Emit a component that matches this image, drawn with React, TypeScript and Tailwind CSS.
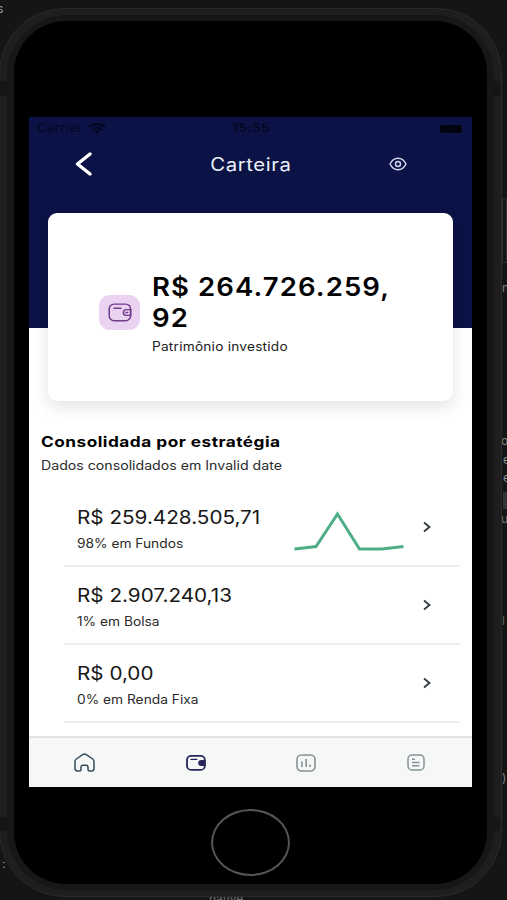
import { JSX } from "react";

interface Estrategia {
  valor: string;
  descricao: string;
  grafico: boolean;
}

const estrategias: Estrategia[] = [
  { valor: "R$ 259.428.505,71", descricao: "98% em Fundos", grafico: true },
  { valor: "R$ 2.907.240,13", descricao: "1% em Bolsa", grafico: false },
  { valor: "R$ 0,00", descricao: "0% em Renda Fixa", grafico: false },
];

// Pieces of the editor window that show around the simulator
const fragmentos: { texto: string; className: string }[] = [
  { texto: "s", className: "left-[-3px] top-[2px] text-[#a0a0a0]" },
  { texto: ":", className: "left-[2px] top-[857px] text-[#909090]" },
  { texto: "native", className: "left-[209px] top-[892px] text-[#707070]" },
  { texto: "n", className: "left-[502px] top-[281px] text-[#808080]" },
  { texto: "o", className: "left-[501px] top-[434px] text-[#808080]" },
  { texto: "e", className: "left-[503px] top-[453px] text-[#909090]" },
  { texto: "e", className: "left-[503px] top-[471px] text-[#909090]" },
  { texto: "u", className: "left-[501px] top-[512px] text-[#707070]" },
  { texto: "l", className: "left-[502px] top-[614px] text-[#606060]" },
  { texto: ")", className: "left-[502px] top-[771px] text-[#808080]" },
];

function WalletIcon({ ativo, className }: { ativo: boolean; className: string }): JSX.Element {
  return (
    <svg viewBox="0 0 24 20" preserveAspectRatio="none" fill="none" stroke="currentColor" className={className}>
      <rect x="1.2" y="1.2" width="21.4" height="17.4" rx="5" strokeWidth={ativo ? 2.2 : 1.5} />
      <path d="M6 5.6h7" strokeWidth="1.6" strokeLinecap="round" />
      <path
        d="M22.6 7h-4.2a3 3 0 0 0 0 6h4.2z"
        fill={ativo ? "currentColor" : "none"}
        strokeWidth="1.5"
      />
      <path d="M18 10h1.6" strokeWidth="1.4" strokeLinecap="round" />
    </svg>
  );
}

function StatusBar(): JSX.Element {
  return (
    <div className="flex h-[22px] items-center pl-[8px] pr-[10px] pt-[1px] text-[11.5px] text-[#050720]">
      <div className="flex flex-1 items-center">
        <span className="w-[51px]">
          <span className="block origin-left scale-x-[1.17] tracking-[0.2px]">Carrier</span>
        </span>
        <svg viewBox="0 0 18 11" className="h-[11px] w-[18px]" fill="none" stroke="currentColor" strokeWidth="2.3">
          <path d="M1 4.2C5.5.2 12.5.2 17 4.2" />
          <path d="M4 7C7 4.4 11 4.4 14 7" />
          <path d="M6.6 8.4C8 7.3 10 7.3 11.4 8.4L9 10.8z" fill="currentColor" stroke="none" />
        </svg>
      </div>
      <span className="ml-[4px] scale-x-[1.17] font-semibold tracking-[0.4px]">15:55</span>
      <div className="flex flex-1 justify-end">
        <div className="h-[8px] w-[22px] rounded-[2px] bg-[#020412]" />
      </div>
    </div>
  );
}

function Header(): JSX.Element {
  return (
    <div className="flex h-[50px] items-center pl-[46px] pr-[65px]">
      <svg viewBox="0 0 18 26" className="h-[26px] w-[18px]" fill="none" stroke="white" strokeWidth="3.5">
        <path d="M15 3L2.5 13L15 23" strokeLinecap="round" strokeLinejoin="round" />
      </svg>
      <div className="flex flex-1 justify-center pl-[19px]">
        <span className="scale-x-[1.13] text-[18px] tracking-[0.5px] text-[#eceef8]">Carteira</span>
      </div>
      <svg viewBox="0 0 18 14" className="h-[14px] w-[18px]" fill="none" stroke="#d5d9ee" strokeWidth="1.4">
        <path d="M1 7C3 3 6 1.2 9 1.2S15 3 17 7C15 11 12 12.8 9 12.8S3 11 1 7z" />
        <circle cx="9" cy="7" r="2.5" />
      </svg>
    </div>
  );
}

function Patrimonio(): JSX.Element {
  return (
    <div className="mx-[19px] mt-[-115px] flex h-[188px] items-center rounded-[9px] bg-white pl-[51px] shadow-[0_6px_16px_rgba(0,0,0,0.11)]">
      <div className="mt-[11px] flex h-[35px] w-[41px] items-center justify-center rounded-[11px] bg-[#ead3f0]">
        <WalletIcon ativo={false} className="h-[19px] w-[24px] text-[#713a8b]" />
      </div>
      <div className="ml-[12px] mt-[13px]">
        <p className="origin-left scale-x-[1.08] whitespace-nowrap text-[25.5px] font-semibold leading-[31px] tracking-[1px] text-black">
          R$ 264.726.259,
          <br />
          92
        </p>
        <p className="mt-[5px] origin-left scale-x-[1.095] whitespace-nowrap text-[12.5px] leading-[18px] tracking-[0.2px] text-[#222]">
          Patrimônio investido
        </p>
      </div>
    </div>
  );
}

function EstrategiaRow({ valor, descricao, grafico }: Estrategia): JSX.Element {
  return (
    <div className="flex h-[78px] items-center border-b-2 border-[#eeeeef] pl-[13px] pr-[29px]">
      <div className="mt-[6px] w-[217px] whitespace-nowrap">
        <p className="origin-left scale-x-[1.118] text-[18.5px] leading-[26px] text-[#161616]">{valor}</p>
        <p className="mt-[1px] origin-left scale-x-[1.1] text-[12.5px] leading-[26px] text-[#2b2b2b]">{descricao}</p>
      </div>
      <div className="flex-1">
        {grafico && (
          <svg viewBox="0 0 112 42" className="mt-[9px] h-[42px] w-[112px]" fill="none" stroke="#4dae86" strokeWidth="3">
            <path d="M0.5 38L22 35.5L43.5 3L65.5 38H88L109.5 35.5" />
          </svg>
        )}
      </div>
      <svg viewBox="0 0 8 12" className="h-[12px] w-[8px]" fill="none" stroke="#30383c" strokeWidth="1.8">
        <path d="M1 1.5L6.5 6L1 10.5" />
      </svg>
    </div>
  );
}

function TabBar(): JSX.Element {
  return (
    <div className="flex h-[51px] items-center justify-between border-t-2 border-[#e2e3e4] bg-[#f6f7f7] pl-[45px] pr-[47px]">
      <svg viewBox="0 0 21 19" className="h-[19px] w-[21px]" fill="none" stroke="#344d59" strokeWidth="1.5">
        <path
          d="M1 8.5Q1 7 2.3 6L8.7 1.6Q10.5.4 12.3 1.6L18.7 6Q20 7 20 8.5V15.5Q20 18 17.5 18H15.5Q14 18 14 16.5V14.5Q14 12.3 12 12.3H9Q7 12.3 7 14.5V16.5Q7 18 5.5 18H3.5Q1 18 1 15.5z"
          strokeLinejoin="round"
        />
      </svg>
      <WalletIcon ativo className="ml-[2px] mt-[1px] h-[16px] w-[20px] text-[#28265a]" />
      <svg viewBox="0 0 20 18" className="mr-[2px] h-[18px] w-[20px]" fill="none" stroke="#829295" strokeWidth="1.6">
        <rect x="1" y="1" width="18" height="16" rx="4.5" />
        <path d="M6 7.5V13M10.2 5V13M14 10.5V13" />
      </svg>
      <svg viewBox="0 0 18 17" className="h-[17px] w-[18px]" fill="none" stroke="#829295" strokeWidth="1.5">
        <rect x="1" y="1" width="16" height="15" rx="4" />
        <path d="M5 5.2H8M5 8.5H12.5M5 11.8H12.5" />
      </svg>
    </div>
  );
}

function App(): JSX.Element {
  return (
    <div className="relative h-[900px] w-[507px] overflow-hidden bg-[#151515] font-['Inter',sans-serif]">
      {fragmentos.map(({ texto, className }) => (
        <span key={className} className={`absolute text-[12px] leading-[14px] ${className}`}>
          {texto}
        </span>
      ))}
      <div className="absolute left-[503px] top-[492px] h-[17px] w-[4px] bg-[#333]" />
      <div className="absolute left-[502px] top-[198px] h-[65px] w-[5px] border border-[#303030]" />

      <div className="relative ml-[-1px] pt-[8px]">
        <div className="h-[889px] w-[503px] rounded-[66px] border border-[#2a2a2a] bg-[#1e1e1e] px-[7px] pt-[6px]">
          <div className="h-[875px] rounded-[60px] bg-[#171717] pl-[7px] pt-[6px]">
            <div className="h-[863px] w-[473px] rounded-[52px] bg-black pl-[15px] pt-[96px]">
              <div className="flex h-[670px] w-[443px] flex-col overflow-hidden bg-white">
                <div className="h-[211px] shrink-0 bg-[#0b1245]">
                  <StatusBar />
                  <Header />
                </div>
                <Patrimonio />
                <div className="mt-[30px] whitespace-nowrap pl-[12px]">
                  <h2 className="origin-left scale-x-[1.19] text-[14.5px] font-bold leading-[21px] tracking-[0.4px] text-black">
                    Consolidada por estratégia
                  </h2>
                  <p className="mt-[3px] origin-left scale-x-[1.132] text-[12.5px] leading-[22px] text-[#2b2b2b]">
                    Dados consolidados em Invalid date
                  </p>
                </div>
                <div className="mt-[12px] flex-1 overflow-hidden pl-[35px] pr-[12px]">
                  {estrategias.map((e) => (
                    <EstrategiaRow key={e.descricao} {...e} />
                  ))}
                </div>
                <TabBar />
              </div>
              <div className="ml-[182px] mt-[22px] h-[67px] w-[79px] rounded-[50%] border-2 border-[#555]" />
            </div>
          </div>
        </div>
        {/* antenna bands */}
        <div className="absolute left-0 top-[81px] h-[15px] w-[8px] bg-[#151515]" />
        <div className="absolute left-0 top-[817px] h-[14px] w-[8px] bg-[#151515]" />
        <div className="absolute left-[494px] top-[81px] h-[15px] w-[7px] bg-[#151515]" />
        <div className="absolute left-[494px] top-[817px] h-[14px] w-[7px] bg-[#151515]" />
      </div>
    </div>
  );
}

export default App;
